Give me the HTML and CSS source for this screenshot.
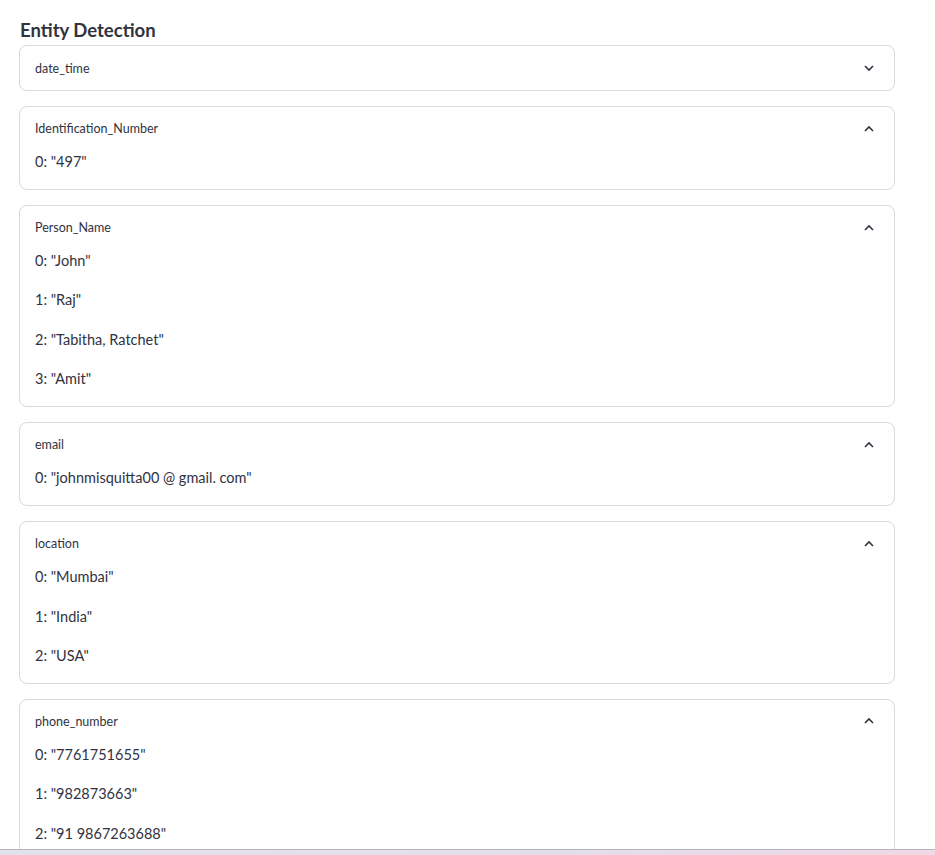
FILE: index.html
```html
<!DOCTYPE html>
<html>
<head>
<meta charset="utf-8">
<link rel="stylesheet" href="styles.css">
</head>
<body>
<main class="page">
  <h3 class="title">Entity Detection</h3>
  <div class="list">
    <section class="exp closed">
      <div class="head"><span class="label">date_time</span>
        <svg class="chev" width="12" height="8" viewBox="0 0 12 8"><path d="M2 2 L6 6 L10 2" fill="none" stroke="#31333f" stroke-width="1.6"/></svg>
      </div>
    </section>
    <section class="exp">
      <div class="head"><span class="label">Identification_Number</span>
        <svg class="chev" width="12" height="8" viewBox="0 0 12 8"><path d="M2 6 L6 2 L10 6" fill="none" stroke="#31333f" stroke-width="1.6"/></svg>
      </div>
      <ul class="items"><li>0: "497"</li></ul>
    </section>
    <section class="exp">
      <div class="head"><span class="label">Person_Name</span>
        <svg class="chev" width="12" height="8" viewBox="0 0 12 8"><path d="M2 6 L6 2 L10 6" fill="none" stroke="#31333f" stroke-width="1.6"/></svg>
      </div>
      <ul class="items"><li>0: "John"</li><li>1: "Raj"</li><li>2: "Tabitha, Ratchet"</li><li>3: "Amit"</li></ul>
    </section>
    <section class="exp">
      <div class="head"><span class="label">email</span>
        <svg class="chev" width="12" height="8" viewBox="0 0 12 8"><path d="M2 6 L6 2 L10 6" fill="none" stroke="#31333f" stroke-width="1.6"/></svg>
      </div>
      <ul class="items"><li>0: "johnmisquitta00 @ gmail. com"</li></ul>
    </section>
    <section class="exp">
      <div class="head"><span class="label">location</span>
        <svg class="chev" width="12" height="8" viewBox="0 0 12 8"><path d="M2 6 L6 2 L10 6" fill="none" stroke="#31333f" stroke-width="1.6"/></svg>
      </div>
      <ul class="items"><li>0: "Mumbai"</li><li>1: "India"</li><li>2: "USA"</li></ul>
    </section>
    <section class="exp">
      <div class="head"><span class="label">phone_number</span>
        <svg class="chev" width="12" height="8" viewBox="0 0 12 8"><path d="M2 6 L6 2 L10 6" fill="none" stroke="#31333f" stroke-width="1.6"/></svg>
      </div>
      <ul class="items"><li>0: "7761751655"</li><li>1: "982873663"</li><li>2: "91 9867263688"</li></ul>
    </section>
  </div>
</main>
<div class="taskbar"></div>
</body>
</html>
```
FILE: styles.css
```css
html, body {
  margin: 0;
  padding: 0;
  background: #ffffff;
  overflow: hidden;
}
body {
  font-family: "Lato", "Liberation Sans", sans-serif;
  color: #31333f;
}
.page {
  padding: 18px 0 0 19px;
  width: 876px;
}
.title {
  margin: 0 0 2px 1px;
  font-size: 18.5px;
  font-weight: 700;
  line-height: 25px;
  height: 25px;
}
.list {
  display: flex;
  flex-direction: column;
  gap: 15px;
}
.exp {
  border: 1px solid #d9d9df;
  border-radius: 8px;
  padding: 0 15px 0 15px;
}
.head {
  display: flex;
  justify-content: space-between;
  align-items: center;
  height: 44px;
}
.exp:not(.closed) .head {
  height: 43px;
}
.label {
  font-size: 12.5px;
}
.chev {
  margin-right: 4px;
}
.items {
  list-style: none;
  margin: 2px 0 0 0;
  padding: 0 0 17px 0;
  display: flex;
  flex-direction: column;
  gap: 19.4px;
}
.items li {
  font-size: 14.5px;
  line-height: 20px;
}
.taskbar {
  position: fixed;
  left: 0;
  right: 0;
  bottom: 0;
  height: 5px;
  border-top: 1px solid #b4b4bc;
  background: linear-gradient(to right, #e2e2ee, #e4deec 60%, #f0d8e6);
}
```
